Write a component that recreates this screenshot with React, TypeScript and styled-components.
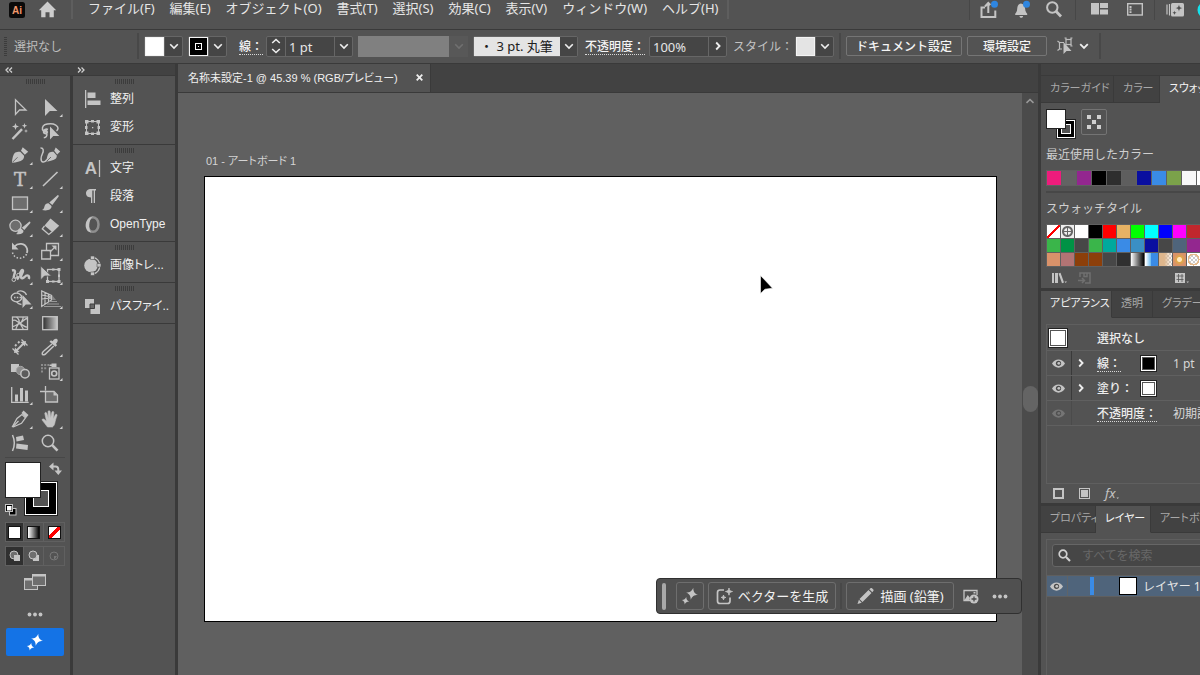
import React from "react";
import styled, { createGlobalStyle, css } from "styled-components";

const c = {
  panel: "#535353",
  dark: "#424242",
  line: "#3a3a3a",
  canvas: "#606060",
  edge: "#666666",
  icon: "#c4c4c4",
  text: "#e6e6e6",
  dim: "#a8a8a8",
  field: "#454545",
};

const compact = css`
  font-family: "Liberation Sans", "Noto Sans CJK JP", sans-serif;
  font-feature-settings: "palt";
`;

const GlobalStyle = createGlobalStyle`
  * { box-sizing: border-box; }
  body {
    margin: 0;
    overflow: hidden;
    background: ${c.panel};
    color: ${c.text};
    font: 12px/18px "Noto Sans", "Noto Sans CJK JP", sans-serif;
  }
  button, input, select { font: inherit; color: inherit; margin: 0; padding: 0; border: 0; background: none; }
  ul { list-style: none; margin: 0; padding: 0; }
  svg { display: block; flex: none; overflow: visible; }
`;

/* ---------- shared pieces ---------- */

const Shell = styled.div`
  height: 100vh;
  display: flex;
  flex-direction: column;
`;

const Chevron = ({ color = "#eeeeee" }: { color?: string }) => (
  <svg width="10" height="10" viewBox="0 0 10 10" fill="none" stroke={color} strokeWidth="1.6">
    <path d="M1.2 3.2 5 7l3.8-3.8" />
  </svg>
);

const ChevronRight = () => (
  <svg width="10" height="10" viewBox="0 0 10 10" fill="none" stroke="#eeeeee" strokeWidth="1.8">
    <path d="M3.2 1.5 6.6 5 3.2 8.5" />
  </svg>
);

const Grip = styled.div`
  width: 19px;
  height: 5px;
  margin: 0 auto;
  background: repeating-linear-gradient(90deg, #3c3c3c 0 1px, transparent 1px 2px);
`;

/* ---------- menu bar ---------- */

const MenuBar = styled.header`
  flex: none;
  height: 30px;
  display: flex;
  align-items: flex-start;
  border-bottom: 1px solid ${c.line};
  overflow: hidden;
`;

const Brand = styled.div`
  display: flex;
  align-items: center;
  gap: 13px;
  width: 73px;
  height: 19px;
  padding-left: 9px;
  border-right: 2px solid #5e5e5e;
`;

const MenuList = styled.nav`
  display: flex;
  gap: 15px;
  width: 656px;
  height: 19px;
  padding-left: 15px;
  border-right: 2px solid #5e5e5e;
`;

const MenuLink = styled.a`
  color: ${c.text};
  font-size: 13px;
  line-height: 16px;
  text-decoration: none;
  white-space: nowrap;
`;

const MenuTools = styled.div`
  margin-left: auto;
  display: flex;
  align-items: flex-start;
  flex: none;
  width: 231px;
`;

const ToolSet = styled.div<{ $width: number; $gap: number; $pad: number }>`
  display: flex;
  align-items: center;
  flex: none;
  width: ${(p) => p.$width}px;
  gap: ${(p) => p.$gap}px;
  height: 20px;
  padding: 0 0 1px ${(p) => p.$pad}px;
  border-left: 1px solid #474747;
`;

const PlainButton = styled.button`
  display: flex;
  align-items: center;
  justify-content: center;
  flex: none;
`;

const Logo = () => (
  <svg width="16" height="16" viewBox="0 0 16 16">
    <rect width="16" height="16" rx="2.5" fill="#0a0a0a" />
    <text x="8" y="12" textAnchor="middle" fontFamily="Liberation Sans" fontWeight="700" fontSize="10" fill="#f2976a">Ai</text>
  </svg>
);

const menus = ["ファイル(F)", "編集(E)", "オブジェクト(O)", "書式(T)", "選択(S)", "効果(C)", "表示(V)", "ウィンドウ(W)", "ヘルプ(H)"];

const TopMenu = () => (
  <MenuBar>
    <Brand>
      <Logo />
      <PlainButton aria-label="ホーム">
        <svg width="19" height="17" viewBox="0 0 19 17" fill="#cdcdcd">
          <path d="M9.5 0.5 0.8 9.2h2.4v7h4.3v-5h4v5h4.3v-7h2.4z" />
        </svg>
      </PlainButton>
    </Brand>
    <MenuList>
      {menus.map((m) => (
        <MenuLink href="#" key={m}>{m}</MenuLink>
      ))}
    </MenuList>
    <MenuTools>
      <ToolSet $width={106} $gap={17} $pad={10}>
        <PlainButton aria-label="共有">
          <svg width="18" height="18" viewBox="0 0 18 18" fill="none" stroke={c.icon} strokeWidth="2">
            <path d="M5 6.500H1.500V16h13.800V9.500M8.300 12V3M5 5.500 8.300 2l2 2" />
            <circle cx="14.500" cy="3.200" r="3.500" fill="#2f86e0" stroke="none" />
          </svg>
        </PlainButton>
        <PlainButton aria-label="お知らせ">
          <svg width="14" height="18" viewBox="0 0 14 18" fill={c.icon}>
            <path d="M6 2.500c-3 .5-3.600 3-3.800 5.600-.1 2-.8 3.400-2 4.600V14h12v-1.300c-1.200-1.200-1.900-2.600-2-4.600C10 5.500 9 3 6 2.500zM4.500 15h3.600c0 1.200-.8 1.800-1.800 1.800S4.500 16.200 4.500 15z" />
            <circle cx="11.500" cy="3.200" r="3.500" fill="#2f86e0" />
          </svg>
        </PlainButton>
        <PlainButton aria-label="検索">
          <svg width="16" height="17" viewBox="0 0 16 17" fill="none" stroke={c.icon} strokeWidth="2">
            <circle cx="6.300" cy="6.500" r="5.200" />
            <path d="m10 10.300 5 5.200" strokeWidth="2.800" />
          </svg>
        </PlainButton>
      </ToolSet>
      <ToolSet $width={79} $gap={19} $pad={15}>
        <PlainButton aria-label="ドキュメントの配置">
          <svg width="17" height="13" viewBox="0 0 17 13" fill={c.icon}>
            <path d="M0 0h8v11.500H0zM9 0h8v5H9zM9 6.500h8v5H9z" />
          </svg>
        </PlainButton>
        <PlainButton aria-label="ワークスペース">
          <svg width="16" height="13" viewBox="0 0 16 13" fill="none" stroke={c.icon}>
            <rect x=".7" y=".7" width="14.600" height="11.300" strokeWidth="1.400" />
            <path d="M3.500 3v7" strokeWidth="2" strokeDasharray="2 .6" />
          </svg>
        </PlainButton>
      </ToolSet>
      <ToolSet $width={60} $gap={13} $pad={11}>
        <PlainButton aria-label="生成">
          <svg width="18" height="14" viewBox="0 0 18 14">
            <path d="M1 1.500v10M3.500 1v11.500" stroke={c.icon} strokeWidth="1.200" />
            <rect x="5" width="13" height="13.500" rx="1.500" fill={c.icon} />
            <path d="M13 1.500c.3 2.500 1 3.200 3.500 3.500-2.500.4-3.200 1.200-3.500 3.700-.4-2.500-1.100-3.300-3.500-3.700 2.400-.3 3.100-1 3.500-3.500zM8.500 7.500c.2 1.600.6 2 2.200 2.200-1.600.3-2 .8-2.200 2.400-.2-1.600-.7-2.100-2.200-2.400 1.500-.2 2-.6 2.200-2.200z" fill="#505050" />
          </svg>
        </PlainButton>
        <PlainButton aria-label="アカウント">
          <svg width="18" height="18" viewBox="0 0 18 18"><circle cx="9" cy="9" r="8.500" fill="#12e3ee" /></svg>
        </PlainButton>
      </ToolSet>
    </MenuTools>
  </MenuBar>
);

/* ---------- control bar ---------- */

const ControlBar = styled.div`
  flex: none;
  display: flex;
  align-items: center;
  height: 34px;
  padding: 0 0 1px 4px;
  border-bottom: 1px solid ${c.line};
  white-space: nowrap;
  overflow: hidden;
  gap: 5px;
`;

const SideGrip = styled.div`
  flex: none;
  width: 3px;
  height: 19px;
  background: repeating-linear-gradient(180deg, #3c3c3c 0 1px, transparent 1px 2px);
`;

const Status = styled.div`
  flex: none;
  width: 120px;
  padding: 1px 0 0 2px;
  color: #bdbdbd;
`;

const Rule = styled.div`
  flex: none;
  width: 2px;
  height: 26px;
  background: #484848;
`;

const Field = styled.div<{ $gap?: number }>`
  flex: none;
  display: flex;
  height: 21px;
  border: 1px solid ${c.edge};
  border-radius: 2px;
  background: ${c.field};
  margin-right: ${(p) => p.$gap ?? 0}px;
`;

const Cell = styled(PlainButton)`
  width: 18px;
  height: 19px;
  border-left: 1px solid ${c.edge};
  &:first-child { border-left: 0; }
`;

const Swatch = styled.span<{ $fill: string }>`
  width: 19px;
  height: 19px;
  display: flex;
  align-items: center;
  justify-content: center;
  background: ${(p) => p.$fill};
  border: 1px solid #f4f4f4;
`;

const Label = styled.label<{ $width: number; $dim?: boolean }>`
  flex: none;
  width: ${(p) => p.$width}px;
  padding-top: 2px;
  color: ${(p) => (p.$dim ? "#c2c2c2" : "#f4f4f4")};
  font-weight: ${(p) => (p.$dim ? 400 : 500)};
`;

const Dotted = styled.span`
  display: inline-block;
  line-height: 15px;
  border-bottom: 1px dotted #d8d8d8;
`;

const ValueInput = styled.input<{ $width: number }>`
  width: ${(p) => p.$width}px;
  height: 19px;
  padding: 1px 0 0 3px;
  font-size: 13px;
  border-left: 1px solid ${c.edge};
  &:first-child { border-left: 0; }
  outline: none;
`;

const Profile = styled.div`
  flex: none;
  display: flex;
  align-items: center;
  width: 110px;
  height: 21px;
  background: linear-gradient(90deg, #808080 91px, #585858 91px);
  justify-content: flex-end;
  padding-right: 4px;
`;

const Brush = styled.div`
  flex: none;
  display: grid;
  grid-template-columns: 86px 17px;
  align-items: center;
  height: 21px;
  border: 1px solid ${c.edge};
  border-radius: 2px;
  margin-right: 2px;
  svg { grid-area: 1 / 2; justify-self: center; pointer-events: none; }
`;

const BrushSelect = styled.select`
  grid-area: 1 / 1 / 2 / 3;
  appearance: none;
  width: 103px;
  height: 19px;
  padding-left: 6px;
  font-size: 13px;
  color: #202020;
  background: linear-gradient(90deg, #e4e4e4 86px, #454545 86px);
`;

const OutlineButton = styled.button<{ $width: number }>`
  flex: none;
  width: ${(p) => p.$width}px;
  height: 20px;
  padding-top: 1px;
  border: 1px solid #757575;
  border-radius: 2px;
  color: #f4f4f4;
  font-weight: 500;
  line-height: 17px;
`;

const Controls = () => (
  <ControlBar>
    <SideGrip />
    <Status>選択なし</Status>
    <Rule />
    <Field>
      <Swatch $fill="#ffffff" />
      <Cell aria-label="塗り"><Chevron /></Cell>
    </Field>
    <Field $gap={7}>
      <Swatch $fill="#000000">
        <svg width="7" height="7" viewBox="0 0 7 7" fill="none" stroke="#fff"><rect x=".5" y=".5" width="6" height="6" /><path d="M3 3.500h1" /></svg>
      </Swatch>
      <Cell aria-label="線"><Chevron /></Cell>
    </Field>
    <Label htmlFor="weight" $width={22}><Dotted>線：</Dotted></Label>
    <Field>
      <Cell aria-label="増減">
        <svg width="10" height="16" viewBox="0 0 10 16" fill="none" stroke="#eee" strokeWidth="1.600">
          <path d="M1.200 5 5 1.500 8.800 5M1.200 11 5 14.500 8.800 11" />
        </svg>
      </Cell>
      <ValueInput id="weight" $width={49} defaultValue="1 pt" />
      <Cell aria-label="線幅"><Chevron /></Cell>
    </Field>
    <Profile><Chevron color="#707070" /></Profile>
    <Brush>
      <BrushSelect aria-label="ブラシ定義"><option>・ 3 pt. 丸筆</option></BrushSelect>
      <Chevron />
    </Brush>
    <Label htmlFor="opacity" $width={59}><Dotted>不透明度：</Dotted></Label>
    <Field $gap={1}>
      <ValueInput id="opacity" $width={58} defaultValue="100%" />
      <Cell aria-label="不透明度スライダー"><ChevronRight /></Cell>
    </Field>
    <Label as="span" $width={57} $dim>スタイル：</Label>
    <Field>
      <Swatch $fill="#e4e4e4" />
      <Cell aria-label="スタイル"><Chevron /></Cell>
    </Field>
    <Rule />
    <OutlineButton $width={116}>ドキュメント設定</OutlineButton>
    <OutlineButton $width={80}>環境設定</OutlineButton>
    <PlainButton aria-label="選択対象">
      <svg width="42" height="18" viewBox="0 0 42 18" fill="none" stroke="#bdbdbd" strokeWidth="1.200">
        <rect x="14" y="2.500" width="5" height="5" />
        <path d="M12.500 1H14v1.500M20.500 1H19v1.500M20.500 9H19V7.500M12 5.500H7.500V12H10M7.500 5.500 5.500 4M7.500 12l-2 1.500" />
        <path d="M11.500 5v12l3-3h5z" fill="#c4c4c4" stroke="none" />
        <path d="M28.200 7.200 32 11l3.800-3.800" stroke="#eee" strokeWidth="1.800" />
      </svg>
    </PlainButton>
    <Rule />
  </ControlBar>
);

/* ---------- tool panel ---------- */

const Workspace = styled.div`
  flex: 1;
  min-height: 0;
  display: flex;
  background: ${c.line};
  gap: 3px;
`;

const LeftDock = styled.div`
  flex: none;
  width: 175px;
  display: flex;
  flex-direction: column;
`;

const DockHead = styled.div`
  flex: none;
  display: flex;
  align-items: center;
  height: 12px;
  padding-left: 5px;
  gap: 64px;
  background: ${c.dark};
  border-bottom: 1px solid ${c.line};
`;

const DockBody = styled.div`
  flex: 1;
  display: flex;
  gap: 3px;
`;

const ToolPanel = styled.aside`
  width: 70px;
  padding-top: 3px;
  background: ${c.panel};
`;

const ToolGrid = styled.div`
  display: grid;
  grid-template-columns: 24px 24px;
  grid-auto-rows: 24px;
  column-gap: 6px;
  margin: 11px 5px 0;
  padding: 0 3px 2px;
  border-bottom: 1px solid #474747;
`;

const icon = c.icon;
const outline = { fill: "none", stroke: icon, strokeWidth: 1.3 };

const tools: { name: string; more?: boolean; art: React.ReactNode }[] = [
  { name: "選択", art: <path d="M7.500 4.800v14.600l4-4.400h6.500z" {...outline} /> },
  { name: "ダイレクト選択", more: true, art: <path d="M7 4v17l4.800-5h7.700z" fill={icon} /> },
  {
    name: "自動選択",
    art: (
      <>
        <path d="m4.500 20 9.500-9.800" stroke={icon} strokeWidth="2.400" />
        <path d="m7.500 4 .9 2.600 2.600.9-2.600.9-.9 2.600-.9-2.600L4 7.500l2.600-.9zM16.500 4l.7 2 2 .7-2 .7-.7 2-.7-2-2-.7 2-.7zM18 10l.5 1.500 1.500.5-1.500.5-.5 1.500-.5-1.500-1.500-.5 1.500-.5z" fill={icon} />
      </>
    ),
  },
  {
    name: "なげなわ",
    art: (
      <>
        <path d="M9 13.500c-3.500-.5-5-2.500-4.500-4.800C5 6.200 8.500 4.800 12.500 4.800s7.500 1.900 7.500 4.400c0 1-.5 1.900-1.500 2.600M10 10.500c-2-1-4.500.2-4.500 2.500 0 1.800 2.500 2.200 3.500 1 1.200-1.600-1-3.200-2.300-1.800M8.800 14.500c.6 2.500-.8 4-3 4.300" {...outline} strokeWidth="1.500" />
        <path d="M12 7.500v13l3.300-3.600h6z" fill={icon} />
      </>
    ),
  },
  {
    name: "ペン",
    more: true,
    art: (
      <>
        <path d="M4 19.800c.2-4.300 1.300-8.800 3.300-10.200 1.400-.9 3.200-1 4.900-.9l3.900 4c0 1.600-.4 3-1.500 4-2 1.700-6.500 2.900-10.600 3.100zM13 7.700 14.700 4.300l5.500 4.400-3.400 3z" fill={icon} />
        <path d="m4.500 19.300 5-5" stroke={c.panel} strokeWidth=".8" />
      </>
    ),
  },
  {
    name: "曲線",
    art: (
      <>
        <path d="M2.500 5c3-.2 3.500 2.500 1.800 6-1.500 3-2 7.500.7 8 2 .3 3-1 4-2.500" {...outline} strokeWidth="1.500" />
        <path d="M8.500 18.500c.2-4 1.300-8 3-9 1.300-.8 2.600-.8 3.900-.7l3.400 3.600c0 1.300-.3 2.500-1.200 3.400-1.700 1.500-5.600 2.500-9.100 2.700zM16.200 7.800 17.700 4.500l4.500 4-3 3z" fill={icon} />
        <path d="m9 18 4-4" stroke={c.panel} strokeWidth=".8" />
      </>
    ),
  },
  { name: "文字", more: true, art: <text x="12" y="19" textAnchor="middle" fontFamily="DejaVu Serif" fontSize="18" fill={icon} stroke={icon} strokeWidth=".5">T</text> },
  { name: "直線", more: true, art: <path d="M5 19 19.500 5" {...outline} strokeWidth="1.600" /> },
  { name: "長方形", more: true, art: <rect x="4.500" y="6" width="15" height="12.500" {...outline} fill="#6e6e6e" /> },
  {
    name: "ブラシ",
    more: true,
    art: <path d="M19.800 4c1 .3 1.200 1 .7 1.800L14.300 14l-3-2.600zM10.500 12.300l3 2.700c.5 3.500-4 5.200-9.500 4 2.200-.8 2-2.200 2.600-4 .6-1.800 2.200-2.900 3.900-2.700z" fill={icon} />,
  },
  {
    name: "塗りブラシ",
    more: true,
    art: (
      <>
        <circle cx="7.500" cy="10.800" r="5.600" {...outline} fill="#6e6e6e" />
        <path d="M21.500 6.500c1 .3 1.200 1 .7 1.800L16.300 15l-2.500-2.300zM13 13.300l2.500 2.400c.3 2.700-3 4-7.500 3.200 2-.8 1.500-2 2-3.300.5-1.500 1.600-2.400 3-2.300z" fill={icon} />
      </>
    ),
  },
  {
    name: "消しゴム",
    more: true,
    art: (
      <>
        <path d="m12.500 3.500 8.700 7.200-6.700 6.500-8-6.800z" fill={icon} />
        <path d="m6.500 11-2.200 2.800 6.500 5.700 3.200-2.800" {...outline} />
      </>
    ),
  },
  {
    name: "回転",
    more: true,
    art: (
      <>
        <path d="M6.500 7.500C10 3.500 17 4 19 9.500c.5 1.500.4 3-.1 4.500" {...outline} strokeWidth="1.800" />
        <path d="M4 3.500v7h6.500z" fill={icon} />
        <path d="M4.500 13.500c1.200 6.500 11 8 14.300 1.300" {...outline} strokeWidth="1.500" strokeDasharray="1.500 1.800" />
      </>
    ),
  },
  {
    name: "拡大・縮小",
    more: true,
    art: (
      <>
        <path d="M8.500 11V4.500h12v12H13M3.700 11.500h8.800V20H3.700z" {...outline} />
        <path d="m12 13 5-5" {...outline} /><path d="M13.500 6.500h5v5z" fill={icon} />
      </>
    ),
  },
  {
    name: "線幅",
    more: true,
    art: (
      <>
        <path d="M4 7.500c2.500-.8 3.500.5 2.800 2.500-.8 2.300-1.500 3.500-.8 5M9 16.500c2-2 2.500-6.500 4.500-9 .8-1 1.700-.5 1.500.8-.5 2.200-2.300 4-2 6 .3 1.700 2.200 1 3.300-.1 1.200-1.300 2.700-2.300 4-1.500 1 .7 1 1.800.5 3.300" {...outline} strokeWidth="2.400" />
        <path d="m5.500 17 8-7.500" {...outline} /><circle cx="5.800" cy="16.700" r="1.800" fill={c.panel} stroke={icon} />
        <circle cx="10.300" cy="12" r="1.600" fill={c.panel} stroke={icon} />
      </>
    ),
  },
  {
    name: "自由変形",
    more: true,
    art: (
      <>
        <rect x="9.500" y="6.500" width="11.500" height="12" {...outline} />
        <path d="M8 17h3v3H8zM19.500 17h3v3h-3zM19.500 5h3v3h-3zM14 5.500h2.500v2H14zM14 17.500h2.500v2H14zM20 11.500h2V14h-2z" fill={icon} />
        <path d="M2.700 3v14l3.800-4h7z" fill={icon} stroke={c.panel} strokeWidth=".8" />
      </>
    ),
  },
  {
    name: "シェイプ形成",
    more: true,
    art: (
      <>
        <path d="M9 5.500C11 3 17 3.500 18.500 8M8.500 14.500c1.200 2 3 3 5 3" {...outline} />
        <ellipse cx="8.500" cy="10.500" rx="5.300" ry="4.300" {...outline} />
        <path d="M6 10.500h10" {...outline} strokeDasharray="1.500 1.300" />
        <path d="M14.500 8v13l3.300-3.500h5.700z" fill={icon} />
      </>
    ),
  },
  {
    name: "遠近グリッド",
    more: true,
    art: (
      <>
        <path d="M3.700 4v15.500L13.500 13V8.500zM3.700 12l9.800-1M7 5.500V17M10.500 7v8M3.700 8l9.800 2" {...outline} strokeWidth="1.200" />
        <path d="M14 8v5h4z" fill="#858585" />
        <path d="M11 14.500h8M9 17h12M6 19.500h17" stroke="#999" strokeWidth="1.200" />
      </>
    ),
  },
  {
    name: "メッシュ",
    art: (
      <>
        <rect x="4.500" y="6" width="15" height="12.500" {...outline} />
        <path d="M4.500 9.500c4-2 5 3 8 2 3-.8 3.500-4 7-4M4.500 15.500c3 0 4.500-3 7.500-2.500 3 .5 4.500 3.500 7.500 3M8.500 6c3 2.500 3.500 4.500 2 7-1 1.700-2.500 3-2.500 5.500M15 6c1 3-3 4.500-2 8 .5 1.800 2.500 2.500 2 4.500" {...outline} strokeWidth="1.300" />
      </>
    ),
  },
  {
    name: "グラデーション",
    art: (
      <>
        <defs><linearGradient id="toolGrad"><stop stopColor="#2d2d2d" /><stop offset="1" stopColor="#c8c8c8" /></linearGradient></defs>
        <rect x="4.700" y="5.700" width="14.600" height="13" stroke={icon} strokeWidth="1.300" fill="url(#toolGrad)" />
      </>
    ),
  },
  {
    name: "寸法",
    art: (
      <>
        <path d="m4.500 13.500 6 6M13.500 4.500l6 6" {...outline} />
        <path d="m8.500 15.500 7-7" {...outline} strokeWidth="1.800" />
        <path d="m6 18 1-5.500 4.500 4.500zM18 6l-1 5.500L12.500 7z" fill={icon} />
        <path d="m7 11 1.500-1.500M10 8l1.500-1.500" {...outline} strokeWidth="1.800" />
      </>
    ),
  },
  {
    name: "スポイト",
    more: true,
    art: (
      <>
        <path d="M14 9 5.800 16c-1.300 1-2 2.800-1.300 3.500s2.500.2 3.500-1L15.800 11" {...outline} strokeWidth="1.500" />
        <path d="M11.500 6.800 13 5.300l1.500 1c1-1.500 2.700-3.300 4.500-2.300 1.500 1 .7 3-1 4.700l1 1.500-1.500 1.500z" fill={icon} />
      </>
    ),
  },
  {
    name: "ブレンド",
    art: (
      <>
        <path d="M3 5h8v8H3z" fill={icon} />
        <circle cx="12.500" cy="11.500" r="4.200" fill="#8d8d8d" stroke="#a8a8a8" />
        <circle cx="17" cy="14.800" r="4.200" {...outline} fill="#5c5c5c" strokeWidth="1.500" />
      </>
    ),
  },
  {
    name: "シンボルスプレー",
    more: true,
    art: (
      <>
        <rect x="11.500" y="9" width="9.500" height="11" {...outline} />
        <path d="M13.500 4.500h5V8h-5zM11.500 5.500h2v1.500h-2z" fill={icon} />
        <circle cx="16.200" cy="14.500" r="2.500" {...outline} strokeWidth="1.600" />
        <path d="M3 5h2v2H3zM6.200 5h2v2h-2zM9.400 5h1.600v2H9.400zM3 8.200h2v2H3zM6.200 8.200h2v2h-2zM3 11.400h2v2H3z" fill="#8c8c8c" />
      </>
    ),
  },
  {
    name: "棒グラフ",
    more: true,
    art: (
      <>
        <path d="M3.700 4v15.300h17" {...outline} />
        <path d="M7 11.500h3v7H7zM12 5h3v13.500h-3zM17 7.500h3v11h-3z" fill={icon} />
      </>
    ),
  },
  {
    name: "アートボード",
    art: (
      <>
        <path d="M2 8.500h5.500M7.500 3v4.500" {...outline} />
        <path d="M7.500 8.500h8.500l3.500 3.500v7h-12z" {...outline} fill="#6e6e6e" />
        <path d="M15.500 8.500v4h4z" fill={icon} />
      </>
    ),
  },
  {
    name: "スライス",
    more: true,
    art: (
      <>
        <path d="M14 7.500 9 11.500 4.500 19.500l1 .3 8-3.500 4-5.500z" {...outline} />
        <path d="M5 19.500 10.500 14" {...outline} />
        <path d="m13.500 6 2-2.500 5 4.500-2.500 3z" fill={icon} />
      </>
    ),
  },
  {
    name: "手のひら",
    more: true,
    art: (
      <path
        d="M9.500 20c-1.600-2-3.700-4.800-5.200-6.700-.6-1 .6-1.800 1.700-1.100l2.500 2-1.700-7.700c-.2-1.200 1.500-1.600 1.900-.4l1.600 5.200-.2-6.600c0-1.300 1.900-1.300 2 0l.6 6.400 1.200-5.900c.3-1.200 2-.9 1.900.3l-.6 6.500 2.100-4.200c.6-1.100 2.100-.4 1.700.8-1.300 3.400-1.700 5.200-2.200 7.600-.4 1.800-1.300 3-2.300 3.800z"
        fill={icon}
        stroke={icon}
        strokeWidth=".6"
      />
    ),
  },
  {
    name: "パスに沿った整列",
    art: (
      <>
        <path d="M4.500 4c2.300 5 2.300 11 0 16" {...outline} strokeWidth="1.500" />
        <path d="m8 6 7-1.500 1 4.500-7.500 1.500zM8.500 12.500 20 14l-.5 5-11.500-1.500z" fill={icon} />
      </>
    ),
  },
  {
    name: "ズーム",
    art: (
      <>
        <circle cx="10" cy="10" r="5.700" {...outline} strokeWidth="1.500" />
        <path d="m14.200 14.200 5.300 5.500" stroke={icon} strokeWidth="2.600" />
      </>
    ),
  },
];

const ToolButton = styled.button`
  width: 24px;
  height: 24px;
`;

const FillStroke = styled.div`
  display: grid;
  grid-template-columns: 19px 17px 17px 4px;
  grid-template-rows: 20px 16px 18px;
  margin: 4px 0 0 5px;
`;

const FillChip = styled.button`
  grid-area: 1 / 1 / 3 / 3;
  z-index: 1;
  background: #fff;
  border: 1px solid #222;
`;

const StrokeChip = styled.button`
  grid-area: 1 / 2 / 4 / 4;
  align-self: end;
  height: 35px;
  border: 1px solid #222;
  background: ${c.panel};
  box-shadow: inset 0 0 0 1px #fff, inset 0 0 0 8px #000, inset 0 0 0 9px #fff;
`;

const Swap = styled(PlainButton)`
  grid-area: 1 / 3 / 2 / 5;
  align-self: start;
  justify-self: end;
`;

const Defaults = styled(PlainButton)`
  grid-area: 3 / 1;
  align-self: end;
  justify-self: start;
`;

const Modes = styled.div<{ $top: number }>`
  display: grid;
  grid-template-columns: 18px 20px 20px;
  width: 60px;
  height: 20px;
  margin: ${(p) => p.$top}px 0 0 5px;
  border: 1px solid #606060;
`;

const Mode = styled(PlainButton)<{ $on?: boolean }>`
  background: ${(p) => (p.$on ? "#303030" : "transparent")};
  border-right: 1px solid #606060;
  &:last-child { border-right: 0; }
`;

const ModeChip = styled.span<{ $bg: string }>`
  width: 13px;
  height: 13px;
  border: 1px solid #111;
  background: ${(p) => p.$bg};
`;

const Center = styled.div<{ $top: number; $height: number }>`
  display: flex;
  align-items: center;
  justify-content: center;
  margin-top: ${(p) => p.$top}px;
  height: ${(p) => p.$height}px;
`;

const Generate = styled(PlainButton)`
  width: 58px;
  height: 28px;
  margin: 6px 0 0 6px;
  background: #1473e6;
  border-radius: 2px;
`;

const Sparkles = ({ color = "#fff" }: { color?: string }) => (
  <svg width="18" height="18" viewBox="0 0 18 18" fill={color}>
    <path d="M0-6.800C.9-2.500 2.500-.9 6.800 0 2.500.9.9 2.500 0 6.800-.9 2.500-2.500.9-6.800 0-2.500-.9-.9-2.500 0-6.800z" transform="translate(11 6.800) rotate(12) scale(.9)" />
    <path d="M0-4.200C.6-1.600 1.600-.6 4.200 0 1.600.6.6 1.600 0 4.200-.6 1.600-1.600.6-4.200 0-1.600-.6-.6-1.600 0-4.200z" transform="translate(4.500 13.800) rotate(12) scale(.9)" />
  </svg>
);

const Dots = () => (
  <svg width="16" height="5" viewBox="0 0 16 5" fill={icon}>
    <circle cx="2.500" cy="2.500" r="1.900" /><circle cx="8" cy="2.500" r="1.900" /><circle cx="13.500" cy="2.500" r="1.900" />
  </svg>
);

const DrawMode = ({ front = true }: { front?: boolean }) => (
  <svg width="12" height="12" viewBox="0 0 12 12">
    {front ? null : <path d="M5 5h6v6H5z" fill={icon} />}
    <circle cx="5" cy="5" r="4" fill="#6e6e6e" stroke={icon} />
    {front ? <path d="M5 5h6v6H5z" fill={icon} /> : null}
  </svg>
);

const Tools = () => (
  <ToolPanel>
    <Grip />
    <ToolGrid>
      {tools.map((t) => (
        <ToolButton key={t.name} aria-label={t.name}>
          <svg width="24" height="24" viewBox="0 0 24 24">
            {t.art}
            {t.more ? <path d="M24.500 19v3h-3z" fill="#d0d0d0" /> : null}
          </svg>
        </ToolButton>
      ))}
    </ToolGrid>
    <FillStroke>
      <FillChip aria-label="塗り" />
      <StrokeChip aria-label="線" />
      <Swap aria-label="塗りと線を入れ替え">
        <svg width="13" height="13" viewBox="0 0 13 13" fill={icon}>
          <path d="M0 4.500 4.500.5v8zM13 8.500H5.500L9.300 13z" />
          <path d="M4 4.500h2.500Q9.300 4.500 9.300 7.500v2" fill="none" stroke={icon} strokeWidth="2" />
        </svg>
      </Swap>
      <Defaults aria-label="初期設定の塗りと線">
        <svg width="12" height="12" viewBox="0 0 12 12">
          <rect x="4.500" y="4.500" width="6.500" height="6.500" fill="#000" stroke={icon} />
          <rect x=".5" y=".5" width="7" height="7" fill="#000" stroke={icon} /><rect x="2" y="2" width="4.500" height="4.500" fill="#fff" />
        </svg>
      </Defaults>
    </FillStroke>
    <Modes $top={6}>
      <Mode $on aria-label="カラー"><ModeChip $bg="#ffffff" /></Mode>
      <Mode aria-label="グラデーション"><ModeChip $bg="linear-gradient(90deg,#fff,#000)" /></Mode>
      <Mode aria-label="なし"><ModeChip $bg="linear-gradient(135deg,#fff 39%,#f00 39% 61%,#fff 61%)" /></Mode>
    </Modes>
    <Modes $top={4}>
      <Mode $on aria-label="標準描画"><DrawMode /></Mode>
      <Mode aria-label="背面描画"><DrawMode front={false} /></Mode>
      <Mode aria-label="内側描画">
        <svg width="10" height="10" viewBox="0 0 10 10"><circle cx="5" cy="5" r="4" fill="none" stroke="#777" /><path d="M5 5h3L6 8H5z" fill="#777" /></svg>
      </Mode>
    </Modes>
    <Center $top={6} $height={20}>
      <PlainButton aria-label="スクリーンモード">
        <svg width="22" height="16" viewBox="0 0 22 16" fill="#6e6e6e" stroke={icon}>
          <rect x=".5" y="4.500" width="13" height="11" /><path d="M.5 5.500h8" strokeWidth="2" />
          <rect x="8.500" y=".5" width="13" height="11" /><path d="M8.500 1.500h13" strokeWidth="2" />
        </svg>
      </PlainButton>
    </Center>
    <Center $top={14} $height={16}>
      <PlainButton aria-label="ツールバーを編集"><Dots /></PlainButton>
    </Center>
    <Generate aria-label="生成"><Sparkles /></Generate>
  </ToolPanel>
);

/* ---------- collapsed panels ---------- */

const IconDock = styled.aside`
  flex: 1;
  background: ${c.panel};
`;

const DockGroup = styled.div`
  padding: 3px 0;
  border-bottom: 1px solid ${c.line};
`;

const DockItems = styled.div`
  display: flex;
  flex-direction: column;
  padding-top: 1px;
`;

const DockButton = styled.button`
  display: flex;
  align-items: center;
  gap: 8px;
  height: 28px;
  padding-left: 9px;
  color: #f0f0f0;
  white-space: nowrap;
  ${compact}
`;

const dockArt: Record<string, React.ReactNode> = {
  整列: <path d="M3 1v18h1.300V1zM5.500 3.500h8v5.500h-8zM5.500 11.500h13V16h-13z" fill={icon} />,
  変形: (
    <>
      <rect x="4.500" y="4.500" width="12" height="12" fill="none" stroke={icon} />
      <path d="M3 3h3.500v3.500H3zM14.500 3H18v3.500h-3.500zM3 14.500h3.500V18H3zM14.500 14.500H18V18h-3.500zM9 3h3v2.500H9zM9 15.500h3V18H9zM3 9h2.500v3H3zM15.500 9H18v3h-2.500zM10 10h1.300v1.300H10z" fill={icon} />
    </>
  ),
  文字: (
    <>
      <text x="9" y="16" textAnchor="middle" fontFamily="Liberation Sans" fontWeight="700" fontSize="17" fill={icon}>A</text>
      <path d="M17.500 2v17" stroke={icon} strokeWidth="1.300" />
    </>
  ),
  段落: <path d="M9.500 3H14v1.500h-1V17h-1.300V4.500h-1.400V17H9v-5.500C5.500 11.500 4 9.500 4 7.300 4 5 5.500 3 9.500 3z" fill={icon} />,
  OpenType: (
    <>
      <ellipse cx="11" cy="10.500" rx="5.500" ry="7.300" fill="none" stroke="#8e8e8e" strokeWidth="2.500" />
      <path d="M11 2.500c-10 1.500-9 16-1.500 16C6 16 6.500 5 11 2.500z" fill={icon} />
    </>
  ),
  "画像トレ...": (
    <>
      <circle cx="9" cy="10.500" r="6.800" fill={icon} />
      <path d="M11 2.500c9 1.500 9 14.500 0 16.500" fill="none" stroke={icon} strokeWidth="1.300" />
      <path d="M8.500 1h4v3.500h-4zM8.500 17h4v3.500h-4zM15 8.500h4V12h-4z" fill={icon} stroke={c.panel} strokeWidth=".6" />
    </>
  ),
  "パスファイ..": (
    <>
      <path d="M3 3h9v9H3zM8.500 8.500H18V18H8.500z" fill={icon} />
      <path d="M8 8h4.500v4.500H8z" fill="#666" stroke="#3f3f3f" />
    </>
  ),
};

const groups = [["整列", "変形"], ["文字", "段落", "OpenType"], ["画像トレ..."], ["パスファイ.."]];

const Dock = () => (
  <IconDock>
    {groups.map((g) => (
      <DockGroup key={g[0]}>
        <Grip />
        <DockItems>
          {g.map((n) => (
            <DockButton key={n}>
              <svg width="20" height="20" viewBox="0 0 20 20">{dockArt[n]}</svg>
              {n}
            </DockButton>
          ))}
        </DockItems>
      </DockGroup>
    ))}
  </IconDock>
);

const DoubleArrow = ({ right }: { right?: boolean }) => (
  <svg width="8" height="6" viewBox="0 0 8 6" fill="none" stroke="#cfcfcf" strokeWidth="1.300">
    <path d={right ? "m1 .5 2.500 2.500L1 5.500M4.500.5 7 3 4.500 5.500" : "M3.500.5 1 3l2.500 2.500M7 .5 4.500 3 7 5.500"} />
  </svg>
);

/* ---------- document ---------- */

const Doc = styled.main`
  flex: 1;
  min-width: 0;
  display: flex;
  flex-direction: column;
`;

const DocTabs = styled.div`
  flex: none;
  height: 29px;
  display: flex;
  background: ${c.dark};
  border-bottom: 1px solid ${c.line};
`;

const DocTab = styled.div`
  display: flex;
  align-items: center;
  justify-content: space-between;
  width: 253px;
  padding: 0 7px 1px 10px;
  background: ${c.panel};
  border-right: 1px solid ${c.line};
  color: #f0f0f0;
  font-size: 11px;
  white-space: nowrap;
  ${compact}
`;

const Stage = styled.div`
  flex: 1;
  min-height: 0;
  display: flex;
  background: ${c.canvas};
`;

const Canvas = styled.section`
  flex: 1;
  padding: 58px 25px 0 26px;
`;

const ArtLabel = styled.div`
  height: 25px;
  padding-left: 2px;
  color: #d4d4d4;
  font-size: 11px;
  line-height: 20px;
  ${compact}
`;

const Artboard = styled.div`
  position: relative;
  aspect-ratio: 793 / 446;
  background: #fff;
  border: 1px solid #000;
`;

const Cursor = styled.svg`
  position: absolute;
  left: 70%;
  top: 22%;
`;

const TaskBar = styled.div`
  position: absolute;
  right: -26px;
  bottom: 7px;
  display: flex;
  align-items: center;
  gap: 4px;
  width: 366px;
  height: 36px;
  padding-left: 5px;
  background: #505050;
  border: 1px solid #303030;
  border-radius: 4px;
`;

const TaskGrip = styled.div`
  width: 4px;
  height: 27px;
  margin-right: 6px;
  border-radius: 2px;
  background: #a8a8a8;
`;

const TaskButton = styled.button<{ $width: number }>`
  display: flex;
  align-items: center;
  justify-content: center;
  gap: 5px;
  flex: none;
  width: ${(p) => p.$width}px;
  height: 28px;
  border: 1px solid #6e6e6e;
  border-radius: 3px;
  color: #f2f2f2;
  font-size: 13px;
  white-space: nowrap;
`;

const TaskIcons = styled.div`
  display: flex;
  align-items: center;
  gap: 13px;
  margin-left: 5px;
`;

const Scroll = styled.div`
  flex: none;
  width: 16px;
  display: flex;
  flex-direction: column;
  align-items: center;
  padding-top: 3px;
  background: #4b4b4b;
`;

const Thumb = styled.div`
  width: 15px;
  height: 26px;
  margin-top: 280px;
  border-radius: 8px;
  background: #646464;
`;

const Document = () => (
  <Doc>
    <DocTabs>
      <DocTab>
        名称未設定-1 @ 45.39 % (RGB/プレビュー)
        <PlainButton aria-label="閉じる">
          <svg width="7" height="7" viewBox="0 0 7 7" stroke="#eee" strokeWidth="1.800"><path d="m.7.700 5.600 5.600M6.300.700.7 6.300" /></svg>
        </PlainButton>
      </DocTab>
    </DocTabs>
    <Stage>
      <Canvas>
        <ArtLabel>01 - アートボード 1</ArtLabel>
        <Artboard>
          <Cursor width="15" height="20" viewBox="0 0 15 20"><path d="M1.500.5v18l4.500-4.300 7.500-1z" fill="#000" stroke="#fff" strokeWidth=".6" /></Cursor>
          <TaskBar>
            <TaskGrip />
            <TaskButton $width={28} aria-label="生成"><Sparkles color={icon} /></TaskButton>
            <TaskButton $width={128}>
              <svg width="17" height="17" viewBox="0 0 17 17" fill="none" stroke={icon} strokeWidth="1.700">
                <path d="M8 2H4Q1.500 2 1.500 4.500V13Q1.500 15.500 4 15.500H11.500Q14 15.500 14 13V9.500" />
                <path d="M13 0c.3 2.500 1 3.200 3.500 3.500C14 4 13.300 4.700 13 7.200c-.4-2.500-1.100-3.200-3.500-3.700C11.900 3.200 12.600 2.500 13 0zM7.500 7c.2 1.600.8 2.200 2.400 2.400-1.600.3-2.200.9-2.400 2.500-.3-1.600-.9-2.200-2.400-2.500C6.600 9.200 7.200 8.600 7.500 7z" fill={icon} stroke={icon} strokeWidth=".8" />
              </svg>
              ベクターを生成
            </TaskButton>
            <Rule />
            <TaskButton $width={108}>
              <svg width="19" height="17" viewBox="0 0 19 17" fill={icon}>
                <path d="m12.500 2 3 3-9 9-3-3zM13.300 1.200 14.500.3c.6-.4 1-.4 1.500 0l1.300 1.300c.5.5.5 1 0 1.500l-1 1.200zM2.900 11.800l2.800 2.900L1.500 16z" />
              </svg>
              描画 (鉛筆)
            </TaskButton>
            <TaskIcons>
              <PlainButton aria-label="画像を追加">
                <svg width="16" height="15" viewBox="0 0 16 15" fill="none" stroke={icon} strokeWidth="1.300">
                  <path d="M7 11.500H1V1.500h13V6" /><path d="m1.500 11 3.300-5 2.200 3-1 2zM10.500 3h2v1.500h-2z" fill={icon} stroke="none" />
                  <circle cx="11" cy="10" r="4.500" fill={icon} stroke="none" /><path d="M11 7.500v5M8.500 10h5" stroke="#4a4a4a" />
                </svg>
              </PlainButton>
              <PlainButton aria-label="その他"><Dots /></PlainButton>
            </TaskIcons>
          </TaskBar>
        </Artboard>
      </Canvas>
      <Scroll>
        <svg width="10" height="10" viewBox="0 0 10 10" fill="none" stroke="#999" strokeWidth="1.600"><path d="M1.500 6.800 5 3.500l3.500 3.300" /></svg>
        <Thumb />
      </Scroll>
    </Stage>
  </Doc>
);

/* ---------- right panels ---------- */

const RightDock = styled.aside`
  flex: none;
  width: 159px;
  display: flex;
  flex-direction: column;
  overflow: hidden;
`;

const Panel = styled.section<{ $grow?: boolean }>`
  display: flex;
  flex-direction: column;
  width: 240px;
  background: ${c.panel};
  ${(p) => (p.$grow ? css`flex: 1;` : css`height: 215px; border-bottom: 3px solid ${c.line};`)}
`;

const Tabs = styled.div`
  flex: none;
  display: flex;
  height: 27px;
  background: ${c.dark};
`;

const Tab = styled.button<{ $on?: boolean; $width: number }>`
  flex: none;
  width: ${(p) => p.$width}px;
  padding: 0 0 2px 9px;
  text-align: left;
  white-space: nowrap;
  font-size: 11px;
  ${compact}
  border-right: 1px solid ${c.line};
  border-bottom: 1px solid ${(p) => (p.$on ? c.panel : c.line)};
  background: ${(p) => (p.$on ? c.panel : c.dark)};
  color: ${(p) => (p.$on ? "#f4f4f4" : c.dim)};
`;

const SwatchBody = styled.div`
  padding: 6px 0 0 5px;
`;

const ChipRow = styled.div`
  display: flex;
  gap: 5px;
  height: 30px;
`;

const MiniStack = styled.div`
  display: grid;
  grid-template: 10px 10px 10px / 10px 10px 10px;
`;

const MiniFill = styled.button`
  grid-area: 1 / 1 / 3 / 3;
  z-index: 1;
  background: #fff;
  border: 1px solid #222;
`;

const MiniStroke = styled.button`
  grid-area: 2 / 2 / 4 / 4;
  border: 1px solid #222;
  background: ${c.panel};
  box-shadow: inset 0 0 0 1px #fff, inset 0 0 0 4px #000, inset 0 0 0 5px #fff;
`;

const SquareButton = styled(PlainButton)`
  width: 26px;
  height: 26px;
  border: 1px solid #747474;
  border-radius: 2px;
`;

const Heading = styled.h2`
  margin: 6px 0 0;
  font-size: 12px;
  line-height: 20px;
  font-weight: 400;
  color: #cfcfcf;
`;

const Recent = styled.div`
  display: grid;
  grid-template-columns: repeat(15, 14px);
  gap: 1px;
  height: 16px;
  margin-top: 5px;
  padding: 1px;
  background: #606060;
`;

const Divider = styled.hr`
  height: 2px;
  margin: 5px 0 0;
  border: 0;
  background: #474747;
`;

const Tiles = styled.div`
  display: grid;
  grid-template-columns: repeat(15, 13px);
  grid-auto-rows: 13px;
  gap: 1px;
  margin-top: 5px;
  padding: 1px;
  background: #606060;
`;

const Color = styled.button<{ $bg: string }>`
  background: ${(p) => p.$bg};
`;

const Footer = styled.div<{ $gap: number; $height: number; $pad: number }>`
  display: flex;
  align-items: center;
  gap: ${(p) => p.$gap}px;
  height: ${(p) => p.$height}px;
  padding-left: ${(p) => p.$pad}px;
`;

const KindButton = styled(PlainButton)`
  margin-left: 73px;
`;

const recent = ["#ee1c7c", "#636363", "#93278f", "#000000", "#2e2e2e", "#5e5e5e", "#0a0f9f", "#3a8be6", "#7ba24a", "#f8f8f8", "#ffffff", "#cccccc", "#999999", "#666666", "#333333"];

const none = "linear-gradient(135deg, #fff 43%, #f00 43% 57%, #fff 57%)";
const registration =
  "linear-gradient(#666,#666) center/11px 1px no-repeat, linear-gradient(#666,#666) center/1px 11px no-repeat, radial-gradient(circle, #eee 3px, #666 4px 5px, #eee 6px)";
const checker = "repeating-conic-gradient(#ccc 0 25%,#fff 0 50%) 0 0/4px 4px";
const tiles = [
  none, registration, "#ffffff", "#000000", "#ff0000", "#e6b264", "#00ff00", "#00ffff", "#0000ff", "#ff00ff", "#c1272d", "#ed1c24", "#f15a24", "#f7931e", "#fbb03b",
  "#3ab54a", "#009245", "#474747", "#3ab54a", "#00a99d", "#3a8be6", "#3a8fc4", "#0a0f9f", "#474747", "#4f647b", "#93278f", "#9e005d", "#d4145a", "#ed1e79", "#c7b299",
  "#d9926a", "#b27474", "#8c3f0a", "#8c3f0a", "#474747", "#303030", "linear-gradient(90deg,#fff,#000)",
  "linear-gradient(90deg,#fff 5%,#6bbcf4 45%,#3a8be6 50%,#3a8be6)",
  `linear-gradient(90deg,#deb68c 40%,transparent),${checker}`,
  "radial-gradient(circle,#ffe9c0 0 2px,#e0a848 3px,#d9926a 6px)",
  `radial-gradient(circle,transparent 4px,#e6b98a 5px 6px,#fff 6px),${checker}`, "#603813", "#42210b", "#754c24", "#8c6239",
];

const Swatches = () => (
  <Panel>
    <Tabs>
      <Tab $width={73}>カラーガイド</Tab>
      <Tab $width={46}>カラー</Tab>
      <Tab $width={80} $on>スウォッチ</Tab>
    </Tabs>
    <SwatchBody>
      <ChipRow>
        <MiniStack>
          <MiniFill aria-label="塗り" />
          <MiniStroke aria-label="線" />
        </MiniStack>
        <SquareButton aria-label="カラーグループ">
          <svg width="14" height="14" viewBox="0 0 14 14" fill="#d0d0d0"><path d="M0 0h4v4H0zM10 0h4v4h-4zM5 5h4v4H5zM0 10h4v4H0zM10 10h4v4h-4z" /></svg>
        </SquareButton>
      </ChipRow>
      <Heading>最近使用したカラー</Heading>
      <Recent>{recent.map((b, i) => <Color key={i} $bg={b} aria-label={`最近のカラー ${i + 1}`} />)}</Recent>
      <Divider />
      <Heading>スウォッチタイル</Heading>
      <Tiles>{tiles.map((b, i) => <Color key={i} $bg={b} aria-label={`スウォッチ ${i + 1}`} />)}</Tiles>
      <Footer $gap={11} $height={22} $pad={5}>
        <PlainButton aria-label="ライブラリ">
          <svg width="16" height="12" viewBox="0 0 16 12" fill={icon}><path d="M1 1h2v10H1zM4 1h3v10H4zM7.500 1.500l2-.7L13 10.500l-2 .7zM13.500 9.500H16L14.700 11z" /></svg>
        </PlainButton>
        <PlainButton aria-label="ライブラリに追加">
          <svg width="13" height="12" viewBox="0 0 13 12" fill="none" stroke="#707070" strokeWidth="1.500"><path d="M2 5V1h10v10H7M0 8.500h6M4 6l2.500 2.500L4 11M6 1v3.500h3V1" /></svg>
        </PlainButton>
        <KindButton aria-label="スウォッチの種類">
          <svg width="14" height="12" viewBox="0 0 14 12" fill={icon}>
            <path d="M0 1h10v10H0z" /><path d="M1.500 4h7M1.500 7.500h7M3.500 2v8M7 2v8" stroke="#555" strokeWidth=".8" /><path d="M11.500 9.500H14L12.700 11z" />
          </svg>
        </KindButton>
      </Footer>
    </SwatchBody>
  </Panel>
);

const AppearanceBox = styled.ul`
  flex: none;
  height: 160px;
  margin: 6px 0 0 5px;
  padding-top: 1px;
  border: 1px solid #5f5f5f;
`;

const AppRow = styled.li`
  display: grid;
  grid-template-columns: 25px 18px 49px 34px 60px;
  align-items: center;
  height: 25px;
  border-bottom: 1px solid #606060;
  color: #ededed;
  white-space: nowrap;
`;

const EyeCell = styled(PlainButton)`
  height: 24px;
  padding-right: 2px;
  border-right: 1px solid ${c.line};
  &:disabled { opacity: 0.3; }
`;

const Name = styled.span<{ $wide?: boolean }>`
  padding: 2px 0 0 7px;
  font-weight: 500;
  ${(p) => p.$wide && css`grid-column: 3 / 5;`}
`;

const RowChip = styled.button<{ $bg: string; $size: number }>`
  width: ${(p) => p.$size}px;
  height: ${(p) => p.$size}px;
  margin-left: 1px;
  border: 1px solid #222;
  background: ${(p) => p.$bg};
  box-shadow: inset 0 0 0 1px #fff, inset 0 0 0 2px #555;
`;

const Value = styled.span`
  padding-top: 2px;
  color: #d6d6d6;
`;

const Eye = () => (
  <svg width="13" height="9" viewBox="0 0 13 9"><path d="M0 4.500C3-1 10-1 13 4.500 10 10 3 10 0 4.500z" fill={icon} /><circle cx="6.500" cy="4.300" r="2.600" fill="#4a4a4a" /><circle cx="6.800" cy="4.300" r="1.400" fill={icon} /></svg>
);

const Appearance = () => (
  <Panel>
    <Tabs>
      <Tab $width={71} $on>アピアランス</Tab>
      <Tab $width={41}>透明</Tab>
      <Tab $width={100}>グラデーション</Tab>
    </Tabs>
    <AppearanceBox>
      <AppRow>
        <RowChip $bg="#fff" $size={20} aria-label="サムネール" />
        <span />
        <Name $wide>選択なし</Name>
      </AppRow>
      <AppRow>
        <EyeCell aria-label="表示"><Eye /></EyeCell>
        <PlainButton aria-label="展開"><ChevronRight /></PlainButton>
        <Name><Dotted>線：</Dotted></Name>
        <RowChip $bg="#000" $size={17} aria-label="線のカラー" />
        <Value>1 pt</Value>
      </AppRow>
      <AppRow>
        <EyeCell aria-label="表示"><Eye /></EyeCell>
        <PlainButton aria-label="展開"><ChevronRight /></PlainButton>
        <Name>塗り：</Name>
        <RowChip $bg="#fff" $size={17} aria-label="塗りのカラー" />
      </AppRow>
      <AppRow>
        <EyeCell aria-label="表示" disabled><Eye /></EyeCell>
        <span />
        <Name $wide><Dotted>不透明度：</Dotted></Name>
        <Value>初期設定</Value>
      </AppRow>
    </AppearanceBox>
    <Footer $gap={15} $height={19} $pad={12}>
      <PlainButton aria-label="新規線を追加"><svg width="11" height="11" viewBox="0 0 11 11"><rect x="1" y="1" width="9" height="9" fill="none" stroke={icon} strokeWidth="2" /></svg></PlainButton>
      <PlainButton aria-label="新規塗りを追加"><svg width="11" height="11" viewBox="0 0 11 11"><rect x=".5" y=".5" width="10" height="10" fill="none" stroke={icon} /><path d="M2 2h7v7H2z" fill={icon} /></svg></PlainButton>
      <PlainButton aria-label="新規効果を追加">
        <svg width="16" height="14" viewBox="0 0 16 14" fill={icon}><text x="0" y="11" fontFamily="Noto Sans" fontStyle="italic" fontSize="13">fx</text><path d="M11.500 10.500H14L12.700 12z" /></svg>
      </PlainButton>
    </Footer>
  </Panel>
);

const LayerBox = styled.div`
  flex: 1;
  margin: 6px 0 0 5px;
  border: 1px solid #5f5f5f;
  border-bottom: 0;
`;

const Search = styled.label`
  display: flex;
  align-items: center;
  gap: 11px;
  height: 23px;
  margin: 4px 5px 8px;
  padding-left: 5px;
  background: #464646;
  border: 1px solid #666;
  border-radius: 3px;
`;

const SearchInput = styled.input`
  flex: 1;
  min-width: 0;
  outline: none;
  &::placeholder { color: #686868; opacity: 1; }
`;

const LayerRow = styled.div`
  display: flex;
  align-items: center;
  height: 22px;
  background: #4f647b;
  border-top: 1px solid #5f5f5f;
  border-bottom: 1px solid #5f5f5f;
`;

const LayerEye = styled(PlainButton)`
  width: 21px;
  height: 20px;
  padding-right: 2px;
  border-right: 1px solid #5f6468;
`;

const LayerTag = styled.span`
  width: 27px;
  height: 20px;
  border-right: 1px solid #5f6468;
  background: linear-gradient(#3a8be6, #3a8be6) 22px 1px / 4px 18px no-repeat;
`;

const LayerThumb = styled.span`
  width: 18px;
  height: 18px;
  margin: 0 6px 0 24px;
  background: #fff;
  border: 1px solid #000;
`;

const LayerName = styled.span`
  padding-top: 2px;
`;

const Layers = () => (
  <Panel $grow>
    <Tabs>
      <Tab $width={55}>プロパティ</Tab>
      <Tab $width={55} $on>レイヤー</Tab>
      <Tab $width={90}>アートボード</Tab>
    </Tabs>
    <LayerBox>
      <Search>
        <svg width="13" height="13" viewBox="0 0 13 13" fill="none" stroke="#d0d0d0" strokeWidth="1.700"><circle cx="5" cy="5" r="3.800" /><path d="m8 8 4 4" strokeWidth="2.200" /></svg>
        <SearchInput placeholder="すべてを検索" aria-label="すべてを検索" />
      </Search>
      <LayerRow>
        <LayerEye aria-label="表示の切り替え"><Eye /></LayerEye>
        <LayerTag />
        <LayerThumb />
        <LayerName>レイヤー 1</LayerName>
      </LayerRow>
    </LayerBox>
  </Panel>
);

export default function App() {
  return (
    <Shell>
      <GlobalStyle />
      <TopMenu />
      <Controls />
      <Workspace>
        <LeftDock>
          <DockHead><DoubleArrow /><DoubleArrow right /></DockHead>
          <DockBody>
            <Tools />
            <Dock />
          </DockBody>
        </LeftDock>
        <Document />
        <RightDock>
          <DockHead />
          <Swatches />
          <Appearance />
          <Layers />
        </RightDock>
      </Workspace>
    </Shell>
  );
}
